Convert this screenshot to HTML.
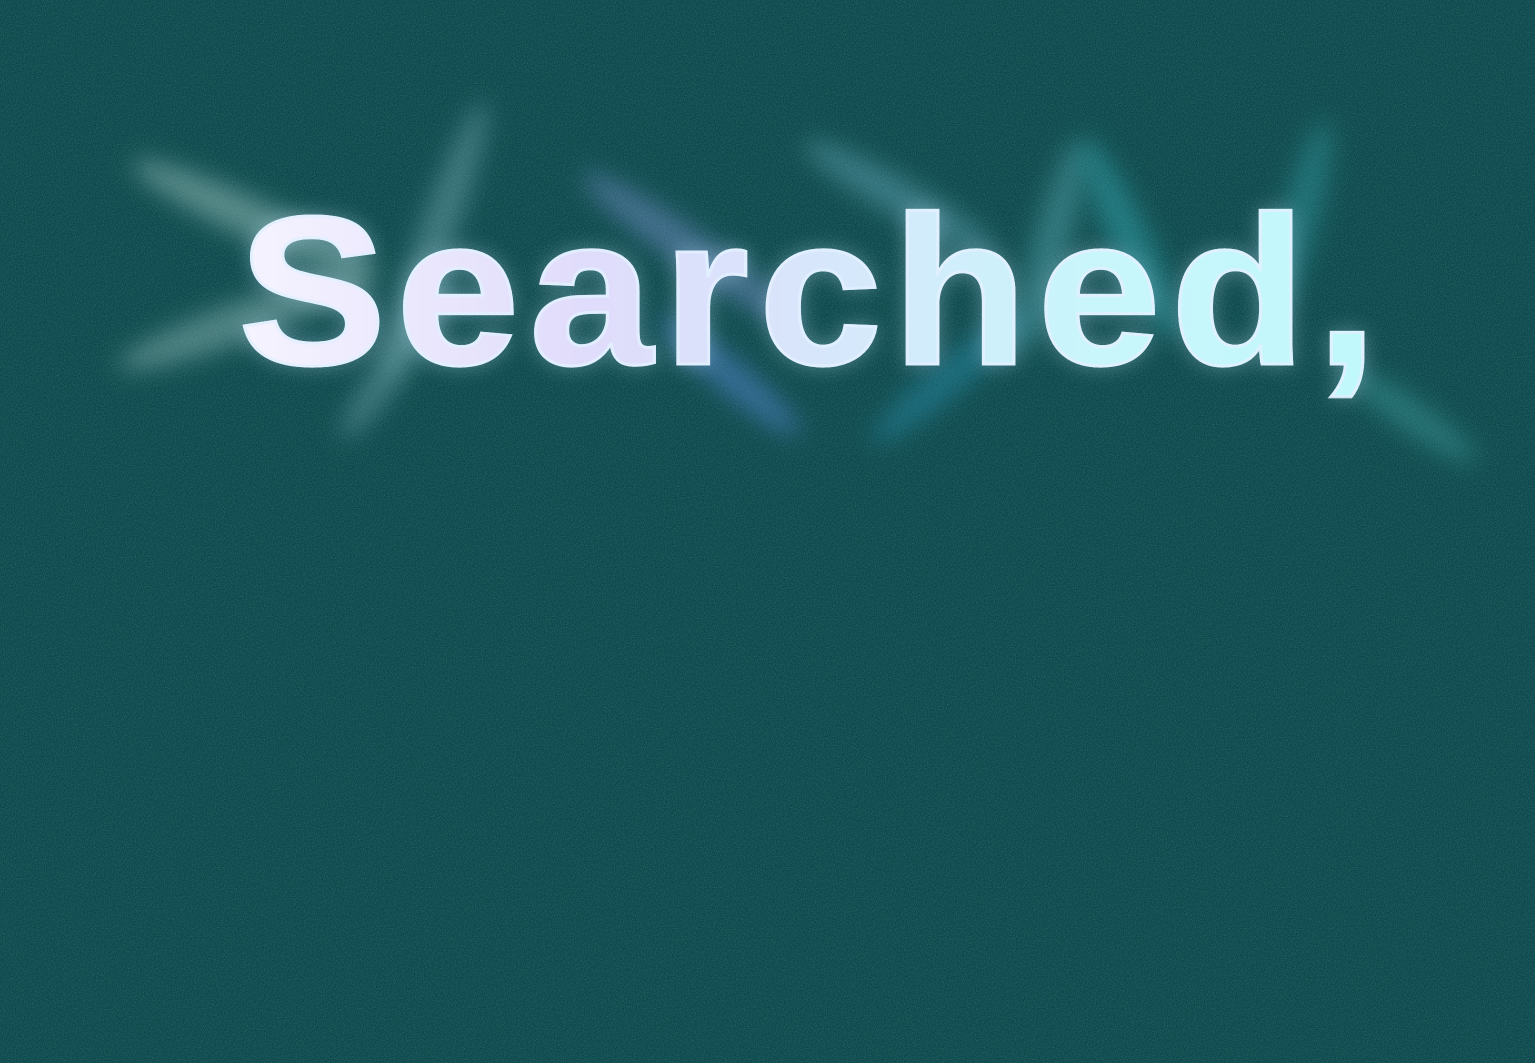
<!DOCTYPE html>
<html><head><meta charset="utf-8"><style>
html,body{margin:0;padding:0}
body{width:1535px;height:1063px;overflow:hidden;background:#0a474a;position:relative}
.noise{position:absolute;inset:0;opacity:.3}
.ray{position:absolute;border-radius:50%;filter:blur(12px)}
.t{position:absolute;left:238px;top:0;font-family:"Liberation Sans",sans-serif;font-weight:700;font-size:212px;letter-spacing:9px;line-height:1;transform:scaleX(1.05);transform-origin:0 0;
background:linear-gradient(90deg,#f6f4ff 0%,#e0dcfb 30%,#d8e6fb 50%,#c8f6fb 75%,#c0f8fc 100%);-webkit-background-clip:text;background-clip:text;color:transparent;-webkit-text-stroke:3px rgba(225,240,255,.9);
filter:drop-shadow(0 0 10px rgba(200,230,255,.35))}
</style></head><body>
<svg class="noise" width="1535" height="1063"><filter id="n"><feTurbulence type="fractalNoise" baseFrequency="0.9" numOctaves="2" stitchTiles="stitch"/><feColorMatrix values="0 0 0 0 0.3  0 0 0 0 0.55  0 0 0 0 0.55  0 0 0 1.4 -0.45"/></filter><rect width="1535" height="1063" filter="url(#n)"/></svg>
<div class="ray" style="left:120px;top:200px;width:270px;height:40px;background:rgba(170,210,205,.45);transform:rotate(25deg)"></div>
<div class="ray" style="left:110px;top:300px;width:270px;height:40px;background:rgba(170,210,205,.4);transform:rotate(-20deg)"></div>
<div class="ray" style="left:290px;top:220px;width:290px;height:36px;background:rgba(150,200,210,.35);transform:rotate(-70deg)"></div>
<div class="ray" style="left:300px;top:340px;width:200px;height:32px;background:rgba(150,200,210,.35);transform:rotate(-55deg)"></div>
<div class="ray" style="left:560px;top:230px;width:260px;height:38px;background:rgba(140,160,230,.4);transform:rotate(35deg)"></div>
<div class="ray" style="left:640px;top:360px;width:180px;height:32px;background:rgba(90,140,220,.5);transform:rotate(40deg)"></div>
<div class="ray" style="left:790px;top:180px;width:220px;height:36px;background:rgba(130,200,220,.35);transform:rotate(30deg)"></div>
<div class="ray" style="left:850px;top:360px;width:200px;height:34px;background:rgba(40,140,170,.5);transform:rotate(-40deg)"></div>
<div class="ray" style="left:940px;top:230px;width:220px;height:36px;background:rgba(110,200,210,.35);transform:rotate(-75deg)"></div>
<div class="ray" style="left:1020px;top:220px;width:220px;height:38px;background:rgba(60,190,200,.4);transform:rotate(65deg)"></div>
<div class="ray" style="left:1200px;top:200px;width:200px;height:36px;background:rgba(60,180,190,.35);transform:rotate(-75deg)"></div>
<div class="ray" style="left:1330px;top:400px;width:160px;height:30px;background:rgba(80,190,190,.35);transform:rotate(35deg)"></div>
<div class="t" style="top:185px">Searched,</div>
</body></html>
